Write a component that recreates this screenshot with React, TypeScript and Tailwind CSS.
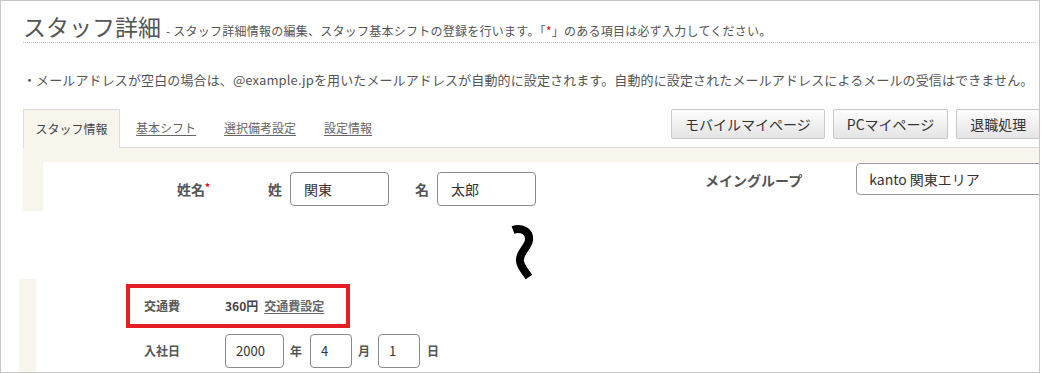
import React from "react";

const beige = "bg-[#f7f5ec]";

export default function App() {
  return (
    <div className="w-[1041px] h-[373px] bg-white font-['Noto_Sans_CJK_JP','Noto_Sans',sans-serif] text-[#555]">
      <div className="w-[1040px] h-[373px] border border-[#c6c6c6] overflow-hidden">
        {/* Title */}
        <div className="ml-[22px] mr-[3px] pt-[11px] pb-[2px] border-b border-dotted border-[#bdbdbd] flex items-baseline">
          <span className="text-[23px] leading-[28px] text-[#555]">スタッフ詳細</span>
          <span className="ml-[5px] text-[12px] leading-[16px] tracking-[0.25px] text-[#555]">
            - スタッフ詳細情報の編集、スタッフ基本シフトの登録を行います。「<span className="text-[#e00]">*</span>」のある項目は必ず入力してください。
          </span>
        </div>

        {/* Notice */}
        <div className="mt-[27px] ml-[22px] text-[13px] leading-[20px] tracking-[0.12px] whitespace-nowrap text-[#555]">
          ・メールアドレスが空白の場合は、@example.jpを用いたメールアドレスが自動的に設定されます。自動的に設定されたメールアドレスによるメールの受信はできません。
        </div>

        {/* Tabs + buttons */}
        <div className="mt-[19px] ml-[22px] flex h-[39px]">
          <div className={`w-[97px] h-[39px] shrink-0 border border-b-0 border-[#dcdcdc] ${beige} flex items-center justify-center text-[12px] text-[#444]`}>
            スタッフ情報
          </div>
          <div className="flex-1 border-b border-[#dcdcdc] flex items-start">
            <div className="flex h-[38px] items-center text-[12px] text-[#666] shrink-0">
              <span className="pl-[16px] pr-[14px] underline underline-offset-2">基本シフト</span>
              <span className="px-[14px] underline underline-offset-2">選択備考設定</span>
              <span className="px-[14px] underline underline-offset-2">設定情報</span>
            </div>
            <div className="ml-[285px] flex gap-[8px] shrink-0">
              {["モバイルマイページ", "PCマイページ", "退職処理"].map((t) => (
                <div
                  key={t}
                  className="h-[30px] px-[13px] shrink-0 flex items-center border border-[#c8c8c8] rounded-[2px] bg-gradient-to-b from-[#fdfdfd] to-[#e4e4e4] text-[14px] text-[#333] whitespace-nowrap"
                >
                  {t}
                </div>
              ))}
              <div className="h-[30px] w-[60px] shrink-0 border border-[#c8c8c8] rounded-[2px] bg-gradient-to-b from-[#fdfdfd] to-[#e4e4e4]" />
            </div>
          </div>
        </div>

        {/* Top form section */}
        <div className={`ml-[22px] ${beige} pt-[14px] pl-[20px]`}>
          <div className="bg-white h-[49px] flex items-start whitespace-nowrap">
            <div className="ml-[134px] mt-[10px] flex items-center h-[34px] shrink-0">
              <div className="w-[91px] text-[14px] font-bold text-[#555]">
                姓名<span className="text-[#e00] text-[10px] align-top">*</span>
              </div>
              <span className="text-[14px] font-bold">姓</span>
              <div className="ml-[8px] w-[99px] h-[34px] border border-[#8a8a8a] rounded-[4px] flex items-center pl-[13px] text-[14px] text-[#333]">関東</div>
              <span className="ml-[26px] text-[14px] font-bold">名</span>
              <div className="ml-[8px] w-[99px] h-[34px] border border-[#8a8a8a] rounded-[4px] flex items-center pl-[13px] text-[14px] text-[#333]">太郎</div>
            </div>
            <div className="ml-[169px] mt-[8px] text-[14px] leading-[20px] font-bold shrink-0">メイングループ</div>
            <div className="ml-[54px] mt-[1px] w-[240px] h-[32px] shrink-0 border border-[#999] rounded-[4px] flex items-center pl-[12px] text-[14px] text-[#333]">
              kanto 関東エリア
            </div>
          </div>
        </div>

        {/* Break mark */}
        <div className="h-[68px] flex">
          <svg className="ml-[505px] mt-[12px]" width="34" height="58" viewBox="0 0 34 58">
            <path
              d="M7 7 C15 4, 24 8, 23 17 C22 25, 13 29, 14 38 C15 45, 19 48, 23 54"
              fill="none"
              stroke="#000"
              strokeWidth="8"
              strokeLinecap="butt"
            />
          </svg>
        </div>

        {/* Bottom section */}
        <div className="flex h-[100px]">
          <div className={`ml-[18px] w-[17px] ${beige} shrink-0`} />
          <div className="flex flex-col">
            <div className="ml-[90px] mt-[5px] w-[224px] h-[44px] border-[4px] border-[#e61f26] flex items-center pl-[14px] text-[12px] whitespace-nowrap">
              <span className="w-[81px] font-bold text-[#555]">交通費</span>
              <span className="font-semibold text-[#444]">360円</span>
              <span className="ml-[6px] underline underline-offset-2 text-[#666] font-semibold">交通費設定</span>
            </div>
            <div className="ml-[108px] mt-[6px] flex items-center h-[34px] text-[12px] whitespace-nowrap">
              <span className="w-[81px] font-bold text-[#555]">入社日</span>
              <div className="w-[59px] h-[34px] border border-[#8a8a8a] rounded-[4px] flex items-center pl-[10px] text-[13px] text-[#333]">2000</div>
              <span className="ml-[6px] font-bold">年</span>
              <div className="ml-[8px] w-[42px] h-[34px] border border-[#8a8a8a] rounded-[4px] flex items-center pl-[10px] text-[13px] text-[#333]">4</div>
              <span className="ml-[6px] font-bold">月</span>
              <div className="ml-[8px] w-[42px] h-[34px] border border-[#8a8a8a] rounded-[4px] flex items-center pl-[10px] text-[13px] text-[#333]">1</div>
              <span className="ml-[7px] font-bold">日</span>
            </div>
          </div>
        </div>
      </div>
    </div>
  );
}
